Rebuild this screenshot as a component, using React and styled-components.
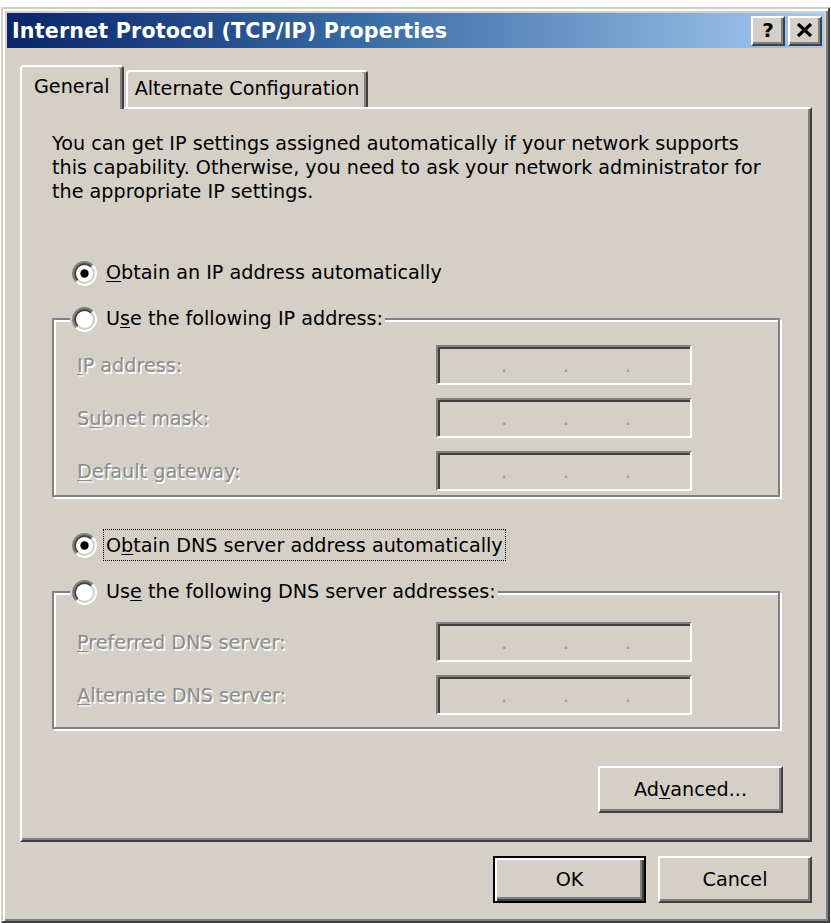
import React from 'react'
import styled, { createGlobalStyle } from 'styled-components'

const GlobalStyle = createGlobalStyle`
  html, body {
    margin: 0;
    padding: 0;
    background: #fff;
  }
  body {
    font-family: "DejaVu Sans", "Liberation Sans", sans-serif;
    font-size: 19.2px;
    color: #000;
  }
`

const Radio = ({ checked }) => (
  <RadioBox viewBox="0 0 12 12" width="25" height="25">
    <path d="M2.111 9.889 A5.5 5.5 0 0 1 9.889 2.111" fill="none" stroke="#808080" strokeWidth="1" />
    <path d="M9.889 2.111 A5.5 5.5 0 0 1 2.111 9.889" fill="none" stroke="#fff" strokeWidth="1" />
    <path d="M2.818 9.182 A4.5 4.5 0 0 1 9.182 2.818" fill="none" stroke="#404040" strokeWidth="1" />
    <path d="M9.182 2.818 A4.5 4.5 0 0 1 2.818 9.182" fill="none" stroke="#d4d0c8" strokeWidth="1" />
    <circle cx="6" cy="6" r="4" fill="#fff" />
    {checked && <circle cx="6" cy="6" r="2" fill="#000" />}
  </RadioBox>
)

const IpBox = () => (
  <IpField>
    <Seg />
    <Dot>.</Dot>
    <Seg />
    <Dot>.</Dot>
    <Seg />
    <Dot>.</Dot>
    <Seg />
  </IpField>
)

export default function App() {
  return (
    <>
      <GlobalStyle />
      <Window>
        <TitleBar>
          <Title>Internet Protocol (TCP/IP) Properties</Title>
          <Caption>
            <CapButton>?</CapButton>
            <CapButton>
              <svg width="16" height="14" viewBox="0 0 8 7">
                <path d="M0.5 0.5 L7 6.5 M7 0.5 L0.5 6.5" stroke="#000" strokeWidth="1.6" />
              </svg>
            </CapButton>
          </Caption>
        </TitleBar>

        <Body>
          <TabStrip>
            <Tab $active>General</Tab>
            <Tab>Alternate Configuration</Tab>
          </TabStrip>

          <Panel>
            <Intro>
              You can get IP settings assigned automatically if your network supports
              <br />
              this capability. Otherwise, you need to ask your network administrator for
              <br />
              the appropriate IP settings.
            </Intro>

            <RadioRow $top={56}>
              <Radio checked />
              <Label><U>O</U>btain an IP address automatically</Label>
            </RadioRow>

            <Group $top={20}>
              <Legend>
                <Radio />
                <Label>U<U>s</U>e the following IP address:</Label>
              </Legend>
              <Rows $pt={13} $pb={4}>
                <Row>
                  <Dim><U>I</U>P address:</Dim>
                  <IpBox />
                </Row>
                <Row>
                  <Dim>S<U>u</U>bnet mask:</Dim>
                  <IpBox />
                </Row>
                <Row>
                  <Dim><U>D</U>efault gateway:</Dim>
                  <IpBox />
                </Row>
              </Rows>
            </Group>

            <RadioRow $top={32}>
              <Radio checked />
              <Label $focus>O<U>b</U>tain DNS server address automatically</Label>
            </RadioRow>

            <Group $top={18}>
              <Legend>
                <Radio />
                <Label>Us<U>e</U> the following DNS server addresses:</Label>
              </Legend>
              <Rows $pt={17} $pb={12}>
                <Row>
                  <Dim><U>P</U>referred DNS server:</Dim>
                  <IpBox />
                </Row>
                <Row>
                  <Dim><U>A</U>lternate DNS server:</Dim>
                  <IpBox />
                </Row>
              </Rows>
            </Group>

            <AdvancedWrap>
              <Button $w={185}>Ad<U>v</U>anced...</Button>
            </AdvancedWrap>
          </Panel>

          <Footer>
            <Button $w={153} $default>OK</Button>
            <Button $w={154}>Cancel</Button>
          </Footer>
        </Body>
      </Window>
    </>
  )
}

const Window = styled.div`
  box-sizing: border-box;
  margin: 7px 1px 0 1px;
  height: 916px;
  background: #d4d0c8;
  border: 2px solid;
  border-color: #d4d0c8 #404040 #404040 #d4d0c8;
  box-shadow: inset 2px 2px #fff, inset -2px -2px #808080;
  padding: 4px;
  display: flex;
  flex-direction: column;
`

const TitleBar = styled.div`
  height: 35px;
  flex: none;
  display: flex;
  align-items: center;
  padding-left: 5px;
  background: linear-gradient(90deg, #0a246a 0%, #3a6ea5 45%, #a6caf0 100%);
`

const Title = styled.div`
  font-family: "DejaVu Sans", sans-serif;
  font-weight: bold;
  font-size: 20.6px;
  letter-spacing: 0.2px;
  color: #fff;
  white-space: nowrap;
`

const Caption = styled.div`
  margin-left: auto;
  margin-right: 2px;
  display: flex;
  gap: 3px;
`

const CapButton = styled.div`
  box-sizing: border-box;
  width: 34px;
  height: 30px;
  display: flex;
  align-items: center;
  justify-content: center;
  background: #d4d0c8;
  border: 2px solid;
  border-color: #fff #404040 #404040 #fff;
  box-shadow: inset -2px -2px #808080;
  font-family: "DejaVu Sans", sans-serif;
  font-weight: bold;
  font-size: 20px;
  line-height: 1;
  padding-bottom: 1px;
`

const Body = styled.div`
  flex: 1;
  display: flex;
  flex-direction: column;
  padding: 17px 12px 14px 13px;
`

const TabStrip = styled.div`
  height: 42px;
  flex: none;
  display: flex;
  align-items: flex-end;
  gap: 2px;
  position: relative;
  z-index: 1;
`

const Tab = styled.div`
  box-sizing: border-box;
  height: ${p => (p.$active ? 44 : 37)}px;
  margin-bottom: ${p => (p.$active ? -2 : 0)}px;
  padding: ${p => (p.$active ? '0 12px' : '0 7px')};
  padding-top: ${p => (p.$active ? 7 : 4)}px;
  background: #d4d0c8;
  border: 2px solid;
  border-bottom: none;
  border-color: #fff #404040 #404040 #fff;
  border-radius: 4px 4px 0 0;
  box-shadow: inset -2px 0 #808080;
  white-space: nowrap;
  line-height: 26px;
`

const Panel = styled.div`
  box-sizing: border-box;
  height: 735px;
  flex: none;
  display: flex;
  flex-direction: column;
  border: 2px solid;
  border-color: #fff #404040 #404040 #fff;
  box-shadow: inset -2px -2px #808080;
  padding: 0 30px;
`

const Intro = styled.p`
  margin: 23px 0 0;
  line-height: 24px;
  white-space: nowrap;
`

const RadioRow = styled.div`
  display: flex;
  align-items: center;
  margin: ${p => p.$top}px 0 0 20px;
  min-height: 26px;
`

const RadioBox = styled.svg`
  flex: none;
  display: block;
`

const Label = styled.span`
  margin-left: ${p => (p.$focus ? 6 : 9)}px;
  line-height: 26px;
  white-space: nowrap;
  padding: ${p => (p.$focus ? '3px 2px 1px' : '0')};
  border: ${p => (p.$focus ? '1px dotted #000' : 'none')};
`

const U = styled.span`
  text-decoration: underline;
  text-underline-offset: 2px;
`

const Group = styled.fieldset`
  margin: ${p => p.$top}px 0 0;
  padding: 0;
  min-inline-size: 0;
  border: 2px solid #808080;
  box-shadow: inset 2px 2px #fff, 2px 2px #fff;
`

const Legend = styled.legend`
  display: flex;
  align-items: center;
  margin-left: 16px;
  padding: 0 2px;
  background: #d4d0c8;
  height: 26px;
`

const Rows = styled.div`
  display: flex;
  flex-direction: column;
  gap: 13px;
  padding: ${p => p.$pt}px 86px ${p => p.$pb}px 23px;
`

const Row = styled.div`
  display: flex;
  align-items: center;
  justify-content: space-between;
  height: 40px;
`

const Dim = styled.span`
  color: #8c8c8c;
  text-shadow: 1.5px 1.5px 0 #fff;
  white-space: nowrap;
`

const IpField = styled.div`
  box-sizing: border-box;
  width: 256px;
  height: 40px;
  display: flex;
  align-items: flex-start;
  padding: 9px 0 0 6px;
  background: #d4d0c8;
  border: 2px solid;
  border-color: #808080 #fff #fff #808080;
  box-shadow: inset 2px 2px #404040, inset -2px -2px #d4d0c8;
`

const Seg = styled.span`
  width: 57px;
  flex: none;
`

const Dot = styled.span`
  width: 5px;
  flex: none;
  text-align: center;
  line-height: 1;
  color: #9a9a9a;
`

const AdvancedWrap = styled.div`
  margin: auto -3px 27px 0;
  display: flex;
  justify-content: flex-end;
`

const Button = styled.div`
  box-sizing: border-box;
  width: ${p => p.$w}px;
  height: 47px;
  display: flex;
  align-items: center;
  justify-content: center;
  background: #d4d0c8;
  border: 2px solid;
  border-color: ${p => (p.$default ? '#000' : '#fff #404040 #404040 #fff')};
  box-shadow: ${p =>
    p.$default
      ? 'inset 2px 2px #fff, inset -2px -2px #404040, inset -4px -4px #808080'
      : 'inset -2px -2px #808080'};
  white-space: nowrap;
`

const Footer = styled.div`
  margin-top: 14px;
  display: flex;
  justify-content: flex-end;
  gap: 12px;
`
